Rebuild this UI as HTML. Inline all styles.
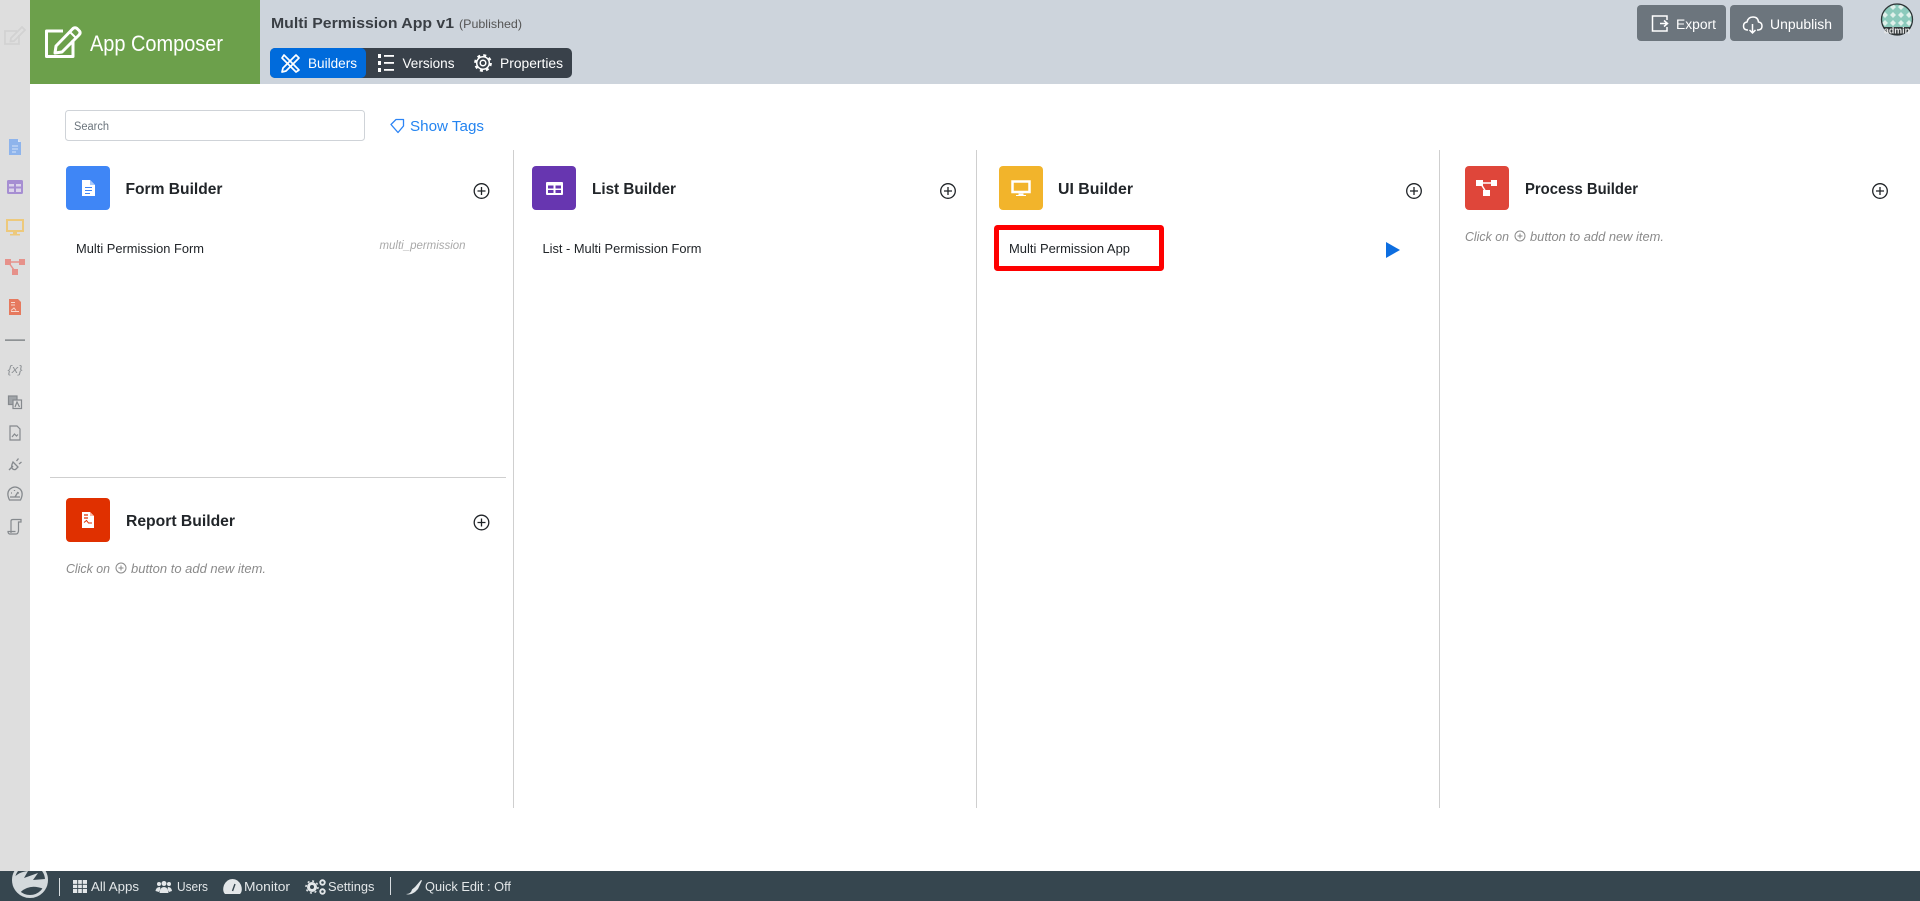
<!DOCTYPE html>
<html lang="en"><head><meta charset="utf-8"><title>App Composer</title>
<style>
html,body{margin:0;padding:0;background:#fff;width:1920px;height:901px;overflow:hidden}
svg{display:block}
text{font-family:"Liberation Sans",Arial,sans-serif;white-space:pre}
</style></head><body>
<svg width="1920" height="901" viewBox="0 0 1920 901" xmlns="http://www.w3.org/2000/svg">
<rect width="1920" height="901" fill="#fff"/>
<!-- sidebar -->
<rect x="0" y="0" width="30" height="871" fill="#dedede"/>
<!-- header -->
<rect x="0" y="0" width="1920" height="84" fill="#cdd4dc" />
<rect x="0" y="0" width="30" height="84" fill="#dedede"/>
<rect x="30" y="0" width="230" height="84" fill="#6ca04b"/>
<!-- sidebar pencil -->
<g fill="none" stroke="#d2d2d2" stroke-width="1.800">
<path d="M17 31H5V44H19V35"/><path d="M11 38L22 27L25 30L14 41L10.500 41.500Z"/>
</g>
<!-- app composer icon -->
<g fill="none" stroke="#fff" stroke-width="3" stroke-linejoin="round">
<path d="M63 31H46.500V56.500H73V40"/><path d="M56 46L73 28.500Q75 27 77 28.500L79.500 31Q81 33 79 35L62 52L55 53Z"/><path d="M70 32L76 38" stroke-width="2"/>
</g>
<text x="90" y="51" font-size="22" fill="#fff" textLength="133" lengthAdjust="spacingAndGlyphs">App Composer</text>
<!-- title -->
<text x="271" y="28" font-size="14.500" font-weight="bold" fill="#3a3f45" textLength="183" lengthAdjust="spacingAndGlyphs">Multi Permission App v1</text>
<text x="459" y="28" font-size="12" fill="#555" textLength="63" lengthAdjust="spacingAndGlyphs">(Published)</text>
<!-- tab group -->
<rect x="270" y="48" width="302" height="30" rx="5" fill="#39414a"/>
<rect x="270" y="48" width="96" height="30" rx="5" fill="#006bdc"/>
<g fill="none" stroke="#fff" stroke-width="1.700" stroke-linejoin="round">
<path d="M296 55L299 58L286 71L282 72L283 68Z"/>
<path d="M284 55L299 70L296 72L282 58Z"/>
</g>
<text x="308" y="68" font-size="13.500" fill="#fff" textLength="49" lengthAdjust="spacingAndGlyphs">Builders</text>
<g fill="#fff"><rect x="384" y="55" width="10" height="1.800"/><rect x="384" y="62" width="10" height="1.800"/><rect x="384" y="69" width="10" height="1.800"/><rect x="378" y="54" width="3" height="4"/><rect x="378" y="61" width="3" height="4"/><rect x="378" y="68" width="3" height="4"/></g>
<text x="402.500" y="68" font-size="13.500" fill="#fff" textLength="52" lengthAdjust="spacingAndGlyphs">Versions</text>
<g fill="none" stroke="#fff"><circle cx="483" cy="63" r="6.300" stroke-width="1.500"/><circle cx="483" cy="63" r="7.800" stroke-width="2.200" stroke-dasharray="3 3.130"/><circle cx="483" cy="63" r="2.800" stroke-width="1.500"/></g>
<text x="500" y="68" font-size="13.500" fill="#fff" textLength="63" lengthAdjust="spacingAndGlyphs">Properties</text>
<!-- right buttons -->
<rect x="1637" y="5" width="89" height="36" rx="4" fill="#6c757d"/>
<rect x="1730" y="5" width="113" height="36" rx="4" fill="#6c757d"/>
<g fill="none" stroke="#fff" stroke-width="1.500"><path d="M1667 20V16H1652.500V31H1667V27"/><path d="M1660 23.500H1667M1664 20.500L1667.500 23.500L1664 26.500"/></g>
<text x="1676" y="29" font-size="13.500" fill="#fff" textLength="40" lengthAdjust="spacingAndGlyphs">Export</text>
<g fill="none" stroke="#fff" stroke-width="1.500"><path d="M1748 30H1747Q1743.500 29.500 1743.500 26Q1743.500 22.500 1747 22Q1748 17 1753 17Q1758 17 1758.500 22Q1762 22.500 1762 26Q1762 29.500 1758.500 30H1757"/><path d="M1752.500 24V33M1749.500 30L1752.500 33L1755.500 30"/></g>
<text x="1770" y="29" font-size="13.500" fill="#fff" textLength="62" lengthAdjust="spacingAndGlyphs">Unpublish</text>
<!-- avatar -->
<defs>
<clipPath id="av"><circle cx="1897" cy="19.500" r="16"/></clipPath>
<clipPath id="ft"><rect x="0" y="871" width="70" height="30"/></clipPath>
<pattern id="dia" x="1881" y="3" width="8" height="8" patternUnits="userSpaceOnUse"><rect width="8" height="8" fill="#8ccabc"/><path d="M4 1L7 4L4 7L1 4Z" fill="#dff0ea"/></pattern>
</defs>
<g clip-path="url(#av)"><rect x="1881" y="3" width="32" height="33" fill="url(#dia)"/><rect x="1881" y="27" width="32" height="9" fill="#34393b"/></g>
<circle cx="1897" cy="19.500" r="15.500" fill="none" stroke="#2e3335" stroke-width="1.300"/>
<text x="1884" y="33.500" font-size="9.500" font-weight="bold" fill="#e8e8e8" textLength="26" lengthAdjust="spacingAndGlyphs">admin</text>

<!-- sidebar icons -->
<path d="M9 139H18L21 142V155H9Z" fill="#8eb4ec"/><path d="M18 139V142H21Z" fill="#dbe7f9"/><path d="M12 146H18M12 149H18M12 152H16" stroke="#d5e3f8" stroke-width="1"/>
<rect x="7" y="180" width="16" height="14" rx="1.500" fill="#a68ed2"/><path d="M9 184H14V186.500H9ZM16 184H21V186.500H16ZM9 188.500H14V192H9ZM16 188.500H21V192H16Z" fill="#dcd4ea"/>
<g fill="none" stroke="#edc97c" stroke-width="2"><rect x="7" y="220" width="16" height="11"/></g><path d="M13 232H17V234H20V235.500H10V234H13Z" fill="#edc97c"/>
<g fill="#e6918a"><rect x="5" y="259" width="6" height="6"/><rect x="19" y="259" width="6" height="6"/><rect x="12" y="269" width="6" height="6"/></g><path d="M8 262H22M9 263L14 270" stroke="#e6918a" stroke-width="1.500" fill="none"/>
<path d="M9 299H18L21 302V315H9Z" fill="#e6795e"/><path d="M11 302.500H15M11 305H15M11 311.500H19" stroke="#f7d8ce" stroke-width="1"/><path d="M11 310.500L14 308L16 310.500" stroke="#f7d8ce" fill="none"/>
<rect x="5" y="339.500" width="20" height="1.200" fill="#6c7175"/>
<text x="7.500" y="373" font-size="11" font-style="italic" fill="#8d9195" textLength="15" lengthAdjust="spacingAndGlyphs">{x}</text>
<g fill="none" stroke="#85898d" stroke-width="1.200"><rect x="8.500" y="396" width="8.500" height="8.500" fill="#a0a4a8"/><rect x="13" y="400" width="8.500" height="8.500" fill="#dedede"/><path d="M15 407L17 402L19.500 407"/></g>
<g fill="none" stroke="#85898d" stroke-width="1.200"><path d="M10 426H17L20 429V440H10Z"/><path d="M12 437L14.500 434L16.500 436L18 434.500"/></g>
<g fill="none" stroke="#85898d" stroke-width="1.300"><path d="M9 470L13 466"/><path d="M13 462L18 467L15.500 469.500Q13 470 12 468Q11 466 13 462Z"/><path d="M16.500 461L18.500 458.500M19 464L21.500 462"/></g>
<g fill="none" stroke="#85898d" stroke-width="1.300"><path d="M9.500 500Q6 493 10 489Q15 485 20 489Q24 493 20.500 500Z"/><path d="M15 497L18 492M10 497H20"/><path d="M11 493H12M14.500 490V491M18 493H19"/></g>
<g fill="none" stroke="#85898d" stroke-width="1.200"><path d="M11 533V521Q11 519.500 13 519.500H21V522H18.500V531Q18 534 16 534H9.500Q8 533.500 8 531.500H15.500"/></g>

<!-- search -->
<rect x="65.500" y="110.500" width="299" height="30" rx="3" fill="#fff" stroke="#cfd3d8"/>
<text x="74" y="130" font-size="11.500" fill="#6c757d" textLength="35" lengthAdjust="spacingAndGlyphs">Search</text>
<path d="M391 124.500L396 119.500H403.500V126L398 132.500Z" fill="none" stroke="#2c84f5" stroke-width="1.300" stroke-linejoin="round"/>
<text x="410" y="131" font-size="15" fill="#2484f0" textLength="74" lengthAdjust="spacingAndGlyphs">Show Tags</text>

<!-- dividers -->
<g fill="#cfcfcf"><rect x="513" y="150" width="1" height="658"/><rect x="976" y="150" width="1" height="658"/><rect x="1439" y="150" width="1" height="658"/><rect x="50" y="477" width="456" height="1"/></g>

<!-- tiles -->
<rect x="66" y="166" width="44" height="44" rx="4" fill="#3f86f6"/>
<rect x="532" y="166" width="44" height="44" rx="4" fill="#6736b0"/>
<rect x="999" y="166" width="44" height="44" rx="4" fill="#f2b42b"/>
<rect x="1465" y="166" width="44" height="44" rx="4" fill="#df463a"/>
<rect x="66" y="498" width="44" height="44" rx="4" fill="#e03000"/>
<!-- tile icons -->
<path d="M82 180H90L95 185V196H82Z" fill="#fff"/><path d="M90 180V185H95Z" fill="#a8c8fa"/><path d="M85 187.500H92M85 190.500H92M85 193.500H90" stroke="#3f86f6" stroke-width="1"/>
<rect x="546" y="182" width="17" height="13" rx="1" fill="#fff"/><path d="M548 185.500H553.500V188.500H548ZM555.500 185.500H561V188.500H555.500ZM548 190H553.500V193H548ZM555.500 190H561V193H555.500Z" fill="#6736b0"/>
<rect x="1012.500" y="181.500" width="17" height="10.500" fill="none" stroke="#fff" stroke-width="2.500"/><path d="M1018.500 193.500H1023.500V195H1026V196H1016V195H1018.500Z" fill="#fff"/>
<g fill="#fff"><rect x="1476" y="180" width="7" height="6"/><rect x="1491" y="180" width="6" height="6"/><rect x="1483" y="190" width="7" height="6"/></g><path d="M1480 183H1493M1481 184L1486 192" stroke="#fff" stroke-width="1.500" fill="none"/>
<path d="M82 512H90L94 516V528H82Z" fill="#fff"/><path d="M84 515H88M84 518H88" stroke="#e03000" stroke-width="1.200"/><path d="M84 522.500L86.500 520.500L88.500 523H92" stroke="#e03000" fill="none"/>
<path d="M90 512V516H94" fill="#f9b9a8"/>

<!-- titles -->
<g font-weight="bold" fill="#212529" font-size="15.500">
<text x="125.500" y="194" textLength="97" lengthAdjust="spacingAndGlyphs">Form Builder</text>
<text x="592" y="194" textLength="84" lengthAdjust="spacingAndGlyphs">List Builder</text>
<text x="1058" y="194" textLength="75" lengthAdjust="spacingAndGlyphs">UI Builder</text>
<text x="1525" y="194" textLength="113" lengthAdjust="spacingAndGlyphs">Process Builder</text>
<text x="126" y="526" textLength="109" lengthAdjust="spacingAndGlyphs">Report Builder</text>
</g>
<!-- plus buttons -->
<g fill="none" stroke="#1f2327" stroke-width="1.300">
<circle cx="481.500" cy="191" r="7.300"/><path d="M477.500 191H485.500M481.500 187V195"/>
<circle cx="948" cy="191" r="7.300"/><path d="M944 191H952M948 187V195"/>
<circle cx="1414" cy="191" r="7.300"/><path d="M1410 191H1418M1414 187V195"/>
<circle cx="1880" cy="191" r="7.300"/><path d="M1876 191H1884M1880 187V195"/>
<circle cx="481.500" cy="522.500" r="7.300"/><path d="M477.500 522.500H485.500M481.500 518.500V526.500"/>
</g>
<!-- items -->
<g font-size="13" fill="#212529">
<text x="76" y="253" textLength="128" lengthAdjust="spacingAndGlyphs">Multi Permission Form</text>
<text x="542.500" y="253" textLength="159" lengthAdjust="spacingAndGlyphs">List - Multi Permission Form</text>
<text x="1009" y="253" textLength="121" lengthAdjust="spacingAndGlyphs">Multi Permission App</text>
</g>
<text x="379.500" y="249" font-size="12" font-style="italic" fill="#a9a9a9" textLength="86" lengthAdjust="spacingAndGlyphs">multi_permission</text>
<rect x="996.500" y="227.500" width="165" height="41" rx="1" fill="none" stroke="#fe0000" stroke-width="5"/>
<path d="M1386 242V258L1400 250Z" fill="#0d6ee0"/>
<!-- hints -->
<g font-size="12.500" font-style="italic" fill="#8a8a8a">
<text x="1465" y="241" textLength="44" lengthAdjust="spacingAndGlyphs">Click on</text>
<text x="1530" y="241" textLength="134" lengthAdjust="spacingAndGlyphs">button to add new item.</text>
<text x="66" y="573" textLength="44" lengthAdjust="spacingAndGlyphs">Click on</text>
<text x="131" y="573" textLength="135" lengthAdjust="spacingAndGlyphs">button to add new item.</text>
</g>
<g fill="none" stroke="#8a8a8a" stroke-width="1"><circle cx="1520" cy="236" r="5"/><path d="M1517.500 236H1522.500M1520 233.500V238.500"/><circle cx="121" cy="568" r="5"/><path d="M118.500 568H123.500M121 565.500V570.500"/></g>

<!-- footer -->
<rect x="0" y="871" width="1920" height="30" fill="#36464f"/>
<g clip-path="url(#ft)">
<circle cx="30" cy="880" r="16.500" fill="#36464f" stroke="#d3d9dc" stroke-width="3"/>
<path d="M14 878Q18 872 28 871L24 878L38 873L33 880L45 879Q46 884 44 889Q34 885 27 888Q22 890 20 893Q13 887 14 878Z" fill="#d3d9dc"/>
</g>
<rect x="59" y="878" width="1" height="18" fill="#d8dde0"/>
<rect x="390" y="877" width="1" height="18" fill="#d8dde0"/>
<g fill="#e3e7e9">
<path d="M73 880H87V893H73Z"/>
<path d="M155.500 891Q156 887 160 887Q161 889 159 892ZM172 891Q171.500 887 168 887Q167 889 169 892ZM159.500 893Q160 887 164 887Q168 887 168.500 893Z"/><circle cx="159" cy="884" r="2"/><circle cx="164" cy="883.500" r="2.500"/><circle cx="169" cy="884" r="2"/>
<path d="M225 894Q222 891 224 885Q227 879 232.500 879Q238 879 241 885Q243 891 240 894Z"/>
<circle cx="312" cy="887" r="5"/><circle cx="312" cy="887" r="6" fill="none" stroke="#e3e7e9" stroke-width="1.500" stroke-dasharray="2 2.700"/><circle cx="322.500" cy="882.500" r="3.200"/><circle cx="322.500" cy="891.500" r="3.200"/>
<path d="M406 894Q411 894 412 889.500L415 887L421 880L422 880.500L418 889L415 892Q410 895.500 406 894Z"/>
</g>
<g stroke="#36464f" stroke-width="0.900" fill="none"><path d="M77.700 880V893M82.300 880V893M73 884.300H87M73 888.600H87"/><path d="M232.500 891L235 884" stroke-width="1.400"/></g>
<circle cx="312" cy="887" r="2" fill="#36464f"/><circle cx="322.500" cy="882.500" r="1.300" fill="#36464f"/><circle cx="322.500" cy="891.500" r="1.300" fill="#36464f"/>
<g font-size="13" fill="#e3e7e9">
<text x="91" y="891" textLength="48" lengthAdjust="spacingAndGlyphs">All Apps</text>
<text x="177" y="891" textLength="31" lengthAdjust="spacingAndGlyphs">Users</text>
<text x="244" y="891" textLength="46" lengthAdjust="spacingAndGlyphs">Monitor</text>
<text x="328" y="891" textLength="46.500" lengthAdjust="spacingAndGlyphs">Settings</text>
<text x="425" y="891" textLength="86" lengthAdjust="spacingAndGlyphs">Quick Edit : Off</text>
</g>
</svg>
</body></html>
